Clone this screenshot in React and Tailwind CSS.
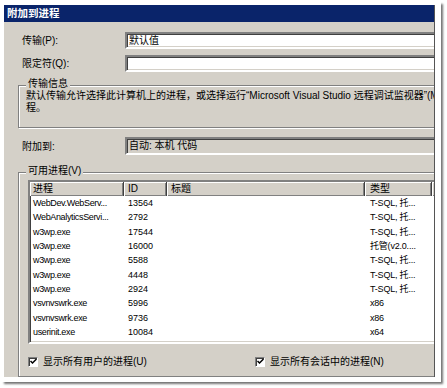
import React from 'react';

const rows = [
    ['WebDev.WebServ...', '13564', 'T-SQL, 托...'],
    ['WebAnalyticsServi...', '2792', 'T-SQL, 托...'],
    ['w3wp.exe', '17544', 'T-SQL, 托...'],
    ['w3wp.exe', '16000', '托管(v2.0....'],
    ['w3wp.exe', '5588', 'T-SQL, 托...'],
    ['w3wp.exe', '4448', 'T-SQL, 托...'],
    ['w3wp.exe', '2924', 'T-SQL, 托...'],
    ['vsvnvswrk.exe', '5996', 'x86'],
    ['vsvnvswrk.exe', '9736', 'x86'],
    ['userinit.exe', '10084', 'x64'],
    ['taskhost.exe', '8480', 'x64'],
];

const sunken = 'border-2 border-t-[#808080] border-l-[#808080] border-b-white border-r-white shadow-[inset_1px_1px_0_#404040,inset_-1px_-1px_0_#d4d0c8]';

const Field = ({ label, children, className = '' }) => (
    <div className={`flex items-center pl-[18px] ${className}`}>
        <div className="w-[103px] shrink-0 text-[10px] leading-[13px]">{label}</div>
        {children}
    </div>
);

const GroupLabel = ({ children }) => (
    <div className="-mt-[9px] ml-[7px] w-fit px-[2px] bg-[#d4d0c8] text-[10px] leading-[13px]">{children}</div>
);

const HeaderCell = ({ w, children }) => (
    <div className={`${w} shrink-0 h-full pl-[3px] text-[10px] leading-[13px] border-r border-r-[#404040] shadow-[inset_1px_1px_0_#fff,inset_-1px_-1px_0_#808080]`}>
        {children}
    </div>
);

const Check = ({ label }) => (
    <div className="flex items-center gap-[5px]">
        <div className="w-[10px] h-[10px] bg-white border border-t-[#808080] border-l-[#808080] border-b-white border-r-white shadow-[inset_1px_1px_0_#404040] flex items-center justify-center">
            <svg width="7" height="7" viewBox="0 0 7 7">
                <path d="M0.5 3 L2.5 5 L6.5 1" stroke="#000" strokeWidth="1.5" fill="none" />
            </svg>
        </div>
        <span className="text-[10px] leading-[13px]">{label}</span>
    </div>
);

export default function App() {
    return (
        <div className="w-[447px] h-[388px] bg-white font-[family-name:'Liberation_Sans','Noto_Sans_CJK_SC',sans-serif] text-black overflow-hidden">
            <div className="w-[441px] h-[382px] bg-white pt-[5px] pl-[4px] shadow-[3px_3px_2px_-1px_rgba(0,0,0,0.55)]">
                {/* Dialog */}
                <div className="w-[431px] h-[372px] bg-[#d4d0c8] border-r border-r-[#555] overflow-hidden flex flex-col">
                    <div className="h-[17px] shrink-0 bg-[#0a246a] text-white font-bold text-[10.5px] leading-[17px] pl-[3px]">
                        附加到进程
                    </div>

                    <Field label="传输(P):" className="mt-[10px]">
                        <div className={`${sunken} bg-white h-[17px] w-[330px] shrink-0 pl-[2px] text-[10px] leading-[13px]`}>默认值</div>
                    </Field>
                    <Field label="限定符(Q):" className="mt-[6px]">
                        <div className={`${sunken} bg-white h-[17px] w-[330px] shrink-0`} />
                    </Field>

                    {/* 传输信息 */}
                    <div className="mt-[13px] ml-[14px] w-[440px] shrink-0 border border-[#808080] shadow-[inset_1px_1px_0_#fff,1px_1px_0_#fff] pb-[13px]">
                        <GroupLabel>传输信息</GroupLabel>
                        <div className="ml-[7px] text-[10px] leading-[12px] whitespace-nowrap">
                            <div>默认传输允许选择此计算机上的进程，或选择运行“Microsoft Visual Studio 远程调试监视器”(MSVSMON.EXE)的远程计算机上的进</div>
                            <div>程。</div>
                        </div>
                    </div>

                    <Field label="附加到:" className="mt-[9px]">
                        <div className={`${sunken} bg-[#d4d0c8] h-[18px] w-[330px] shrink-0 pl-[2px] text-[10px] leading-[14px]`}>自动: 本机 代码</div>
                    </Field>

                    {/* 可用进程 */}
                    <div className="mt-[17px] ml-[14px] w-[440px] flex-1 border border-[#808080] shadow-[inset_1px_1px_0_#fff]">
                        <GroupLabel>可用进程(V)</GroupLabel>
                        <div className={`${sunken} bg-white mt-[3px] ml-[9px] w-[430px] h-[164px] overflow-hidden`}>
                            <div className="flex h-[14px] bg-[#d4d0c8]">
                                <HeaderCell w="w-[94px]">进程</HeaderCell>
                                <HeaderCell w="w-[43px]"><span className="pl-[1px]">ID</span></HeaderCell>
                                <HeaderCell w="w-[198px]"><span className="pl-[1px]">标题</span></HeaderCell>
                                <HeaderCell w="w-[67px]"><span className="pl-[2px]">类型</span></HeaderCell>
                                <HeaderCell w="w-[40px]" />
                            </div>
                            {rows.map((r, i) => (
                                <div key={i} className="flex h-[14.3px] items-center text-[9px] leading-[14px] whitespace-nowrap">
                                    <div className="w-[94px] shrink-0 pl-[3px] tracking-[-0.35px]">{r[0]}</div>
                                    <div className="w-[43px] shrink-0 pl-[4px]">{r[1]}</div>
                                    <div className="w-[198px] shrink-0" />
                                    <div className="w-[67px] shrink-0 pl-[5px] tracking-[-0.2px]">{r[2]}</div>
                                </div>
                            ))}
                        </div>
                        <div className="flex mt-[11px] ml-[9px]">
                            <div className="w-[227px]">
                                <Check label="显示所有用户的进程(U)" />
                            </div>
                            <Check label="显示所有会话中的进程(N)" />
                        </div>
                    </div>
                </div>
            </div>
        </div>
    );
}
